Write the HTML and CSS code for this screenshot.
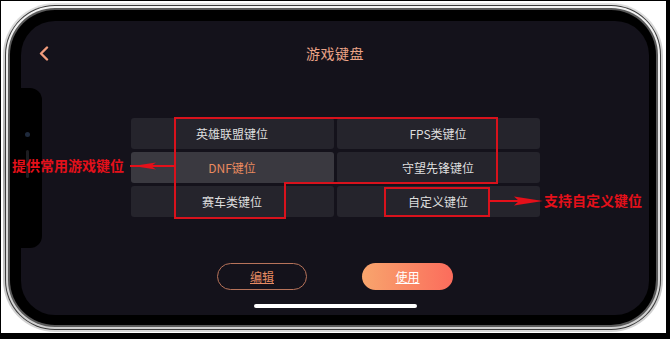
FILE: index.html
```html
<!DOCTYPE html>
<html lang="zh">
<head>
<meta charset="utf-8">
<title>游戏键盘</title>
<link rel="stylesheet" href="styles.css">
</head>
<body>
<div class="page">
  <div class="device">
    <div class="chrome">
      <div class="chrome-in">
        <div class="chrome-line">
          <div class="bezel">
            <div class="screen">
              <div class="notch"><span class="cam"></span><span class="spk"></span></div>
              <header class="topbar">
                <svg class="back" width="10" height="15" viewBox="0 0 10 15"><polyline points="8,1.5 2,7.5 8,13.5" fill="none" stroke="#f29c7c" stroke-width="2.4" stroke-linecap="round" stroke-linejoin="round"/></svg>
                <h1 class="title">游戏键盘</h1>
                <span class="spacer"></span>
              </header>
              <div class="grid">
                <div class="key">英雄联盟键位</div>
                <div class="key">FPS类键位</div>
                <div class="key active">DNF键位</div>
                <div class="key">守望先锋键位</div>
                <div class="key">赛车类键位</div>
                <div class="key">自定义键位</div>
              </div>
              <div class="actions">
                <button class="btn btn-edit">编辑</button>
                <button class="btn btn-use">使用</button>
              </div>
              <div class="home"></div>
            </div>
          </div>
        </div>
      </div>
    </div>
  </div>
  <svg class="annot" width="670" height="339" viewBox="0 0 670 339">
    <polygon points="175,118 497,118 497,183 285,183 285,218 175,218" fill="none" stroke="#d8121c" stroke-width="2"/>
    <rect x="385" y="188" width="104" height="28" fill="none" stroke="#d8121c" stroke-width="2"/>
    <line x1="130" y1="166" x2="175" y2="166" stroke="#e4101a" stroke-width="2"/>
    <polygon points="133,166 156,162.5 151,166 156,169.5" fill="#e4101a"/>
    <line x1="489" y1="201" x2="520" y2="201" stroke="#e4101a" stroke-width="2"/>
    <polygon points="543,201 514,196.5 519,201 514,205.5" fill="#e4101a"/>
    <text class="note" x="12" y="171">提供常用游戏键位</text>
    <text class="note" x="544" y="206">支持自定义键位</text>
  </svg>
</div>
</body>
</html>
```

FILE: styles.css
```css
* { box-sizing: border-box; }
html, body { margin: 0; padding: 0; }
body {
  background: #ffffff;
  font-family: "Noto Sans CJK SC", "Noto Sans", sans-serif;
}
.page {
  position: relative;
  width: 670px;
  height: 339px;
  background: #ffffff;
  border: 1px solid #000;
  border-right-width: 4px;
  border-bottom-width: 6px;
  padding: 2px 0 0 2px;
}
.device {
  width: 660px;
  height: 329px;
  border-radius: 52px;
  background: linear-gradient(180deg, #e2e2e2 0%, #a9a9a9 50%, #d6d6d6 100%);
  padding: 2px;
}
.chrome {
  height: 100%;
  border-radius: 50px;
  background: #3c3c3c;
  padding: 1px;
}
.chrome-in {
  height: 100%;
  border-radius: 49px;
  background: linear-gradient(180deg, #f4f4f4, #cfcfcf);
  padding: 2px;
}
.chrome-line {
  height: 100%;
  border-radius: 47px;
  background: #5a5a5a;
  padding: 2px;
}
.bezel {
  height: 100%;
  border-radius: 45px;
  background: #000;
  padding: 11px 7px 10px 11px;
}
.screen {
  position: relative;
  height: 100%;
  border-radius: 34px;
  background: #14121b;
  display: flex;
  flex-direction: column;
  overflow: hidden;
}
.notch {
  position: absolute;
  left: 0;
  top: 67px;
  width: 21px;
  height: 160px;
  background: #000;
  border-radius: 0 12px 12px 0;
}
.cam {
  position: absolute;
  left: 4px;
  top: 44px;
  width: 5px;
  height: 5px;
  border-radius: 50%;
  background: #1f2a3c;
}
.spk {
  position: absolute;
  left: 5px;
  top: 62px;
  width: 3px;
  height: 28px;
  border-radius: 2px;
  background: #1c1c20;
}
.topbar {
  margin-top: 22px;
  height: 20px;
  padding: 0 18px;
  display: grid;
  grid-template-columns: 1fr auto 1fr;
  align-items: center;
}
.back { display: block; justify-self: start; }
.title {
  margin: 0;
  font-size: 14px;
  font-weight: 400;
  color: #eba387;
  letter-spacing: 0.5px;
  line-height: 20px;
}
.grid {
  margin: 55px auto 0;
  width: 409px;
  display: grid;
  grid-template-columns: 203px 203px;
  grid-auto-rows: 31px;
  gap: 3px;
}
.key {
  background: #25242c;
  border-radius: 3px;
  color: #dedede;
  font-size: 12px;
  display: flex;
  align-items: center;
  justify-content: center;
}
.key.active {
  background: #3a3940;
  color: #e98a5f;
}
.actions {
  margin-top: 46px;
  display: flex;
  justify-content: center;
  gap: 55px;
}
.btn {
  width: 90px;
  height: 27px;
  border-radius: 14px;
  font-family: "Noto Sans CJK SC", "Noto Sans", sans-serif;
  font-size: 12px;
  text-decoration: underline;
  padding: 0;
}
.btn-edit {
  background: transparent;
  border: 1px solid #b7735a;
  color: #e68b63;
}
.btn-use {
  width: 91px;
  border: none;
  background: linear-gradient(90deg, #f8a56d 0%, #fb6c5c 100%);
  color: #ffffff;
}
.home {
  margin: 14px auto 0;
  width: 163px;
  height: 4px;
  border-radius: 2px;
  background: #ffffff;
}
.annot {
  position: absolute;
  left: -1px;
  top: -1px;
  pointer-events: none;
}
.note {
  font-family: "Noto Sans CJK SC", sans-serif;
  font-size: 14px;
  font-weight: 700;
  fill: #e4101a;
}
```
